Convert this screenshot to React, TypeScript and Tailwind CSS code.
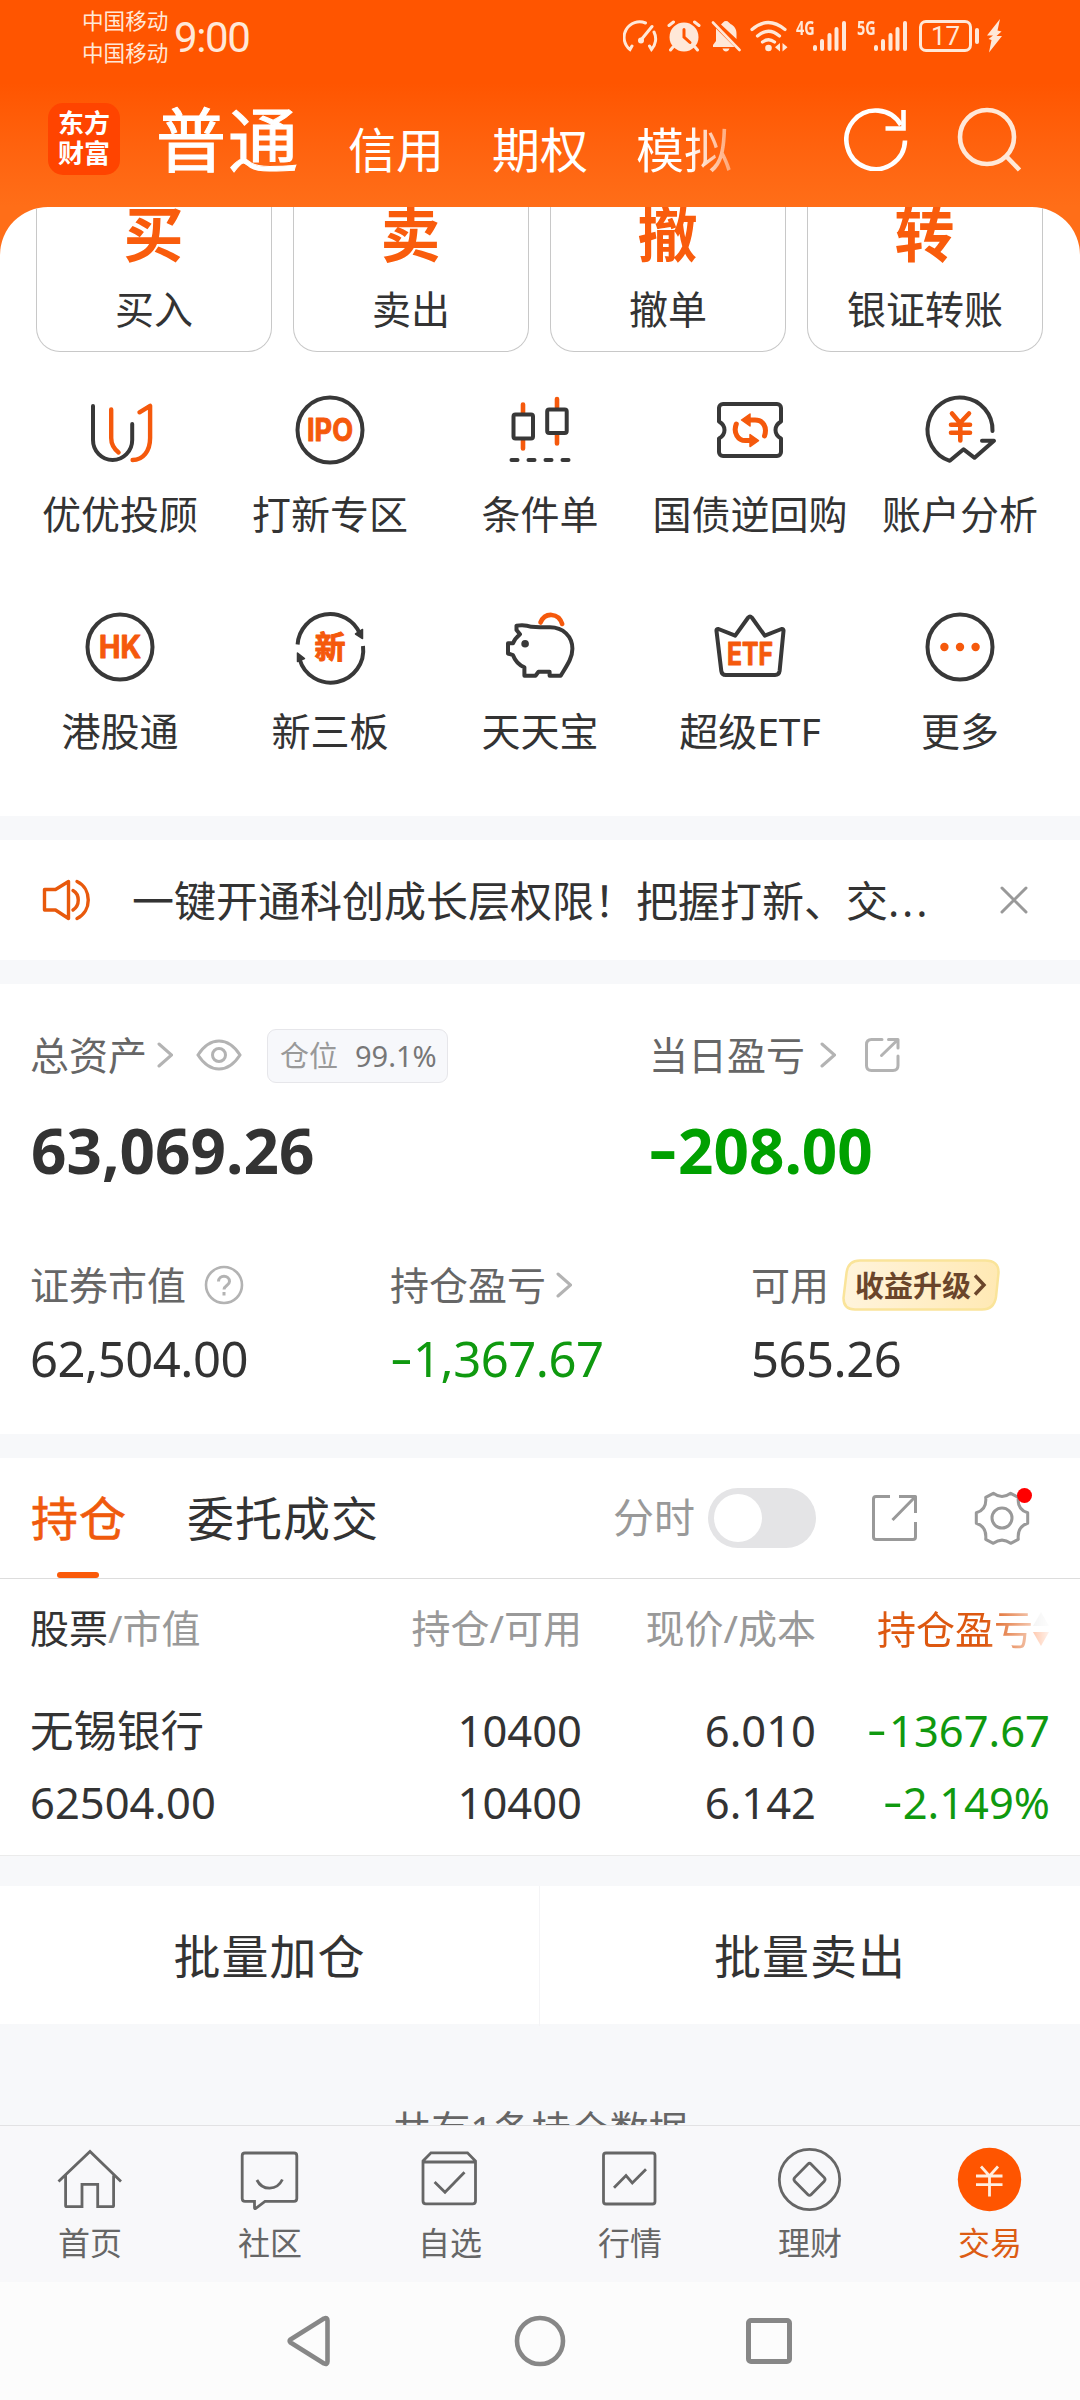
import type { ReactNode } from 'react';
import clsx from 'clsx';

const quickActions = [
  { mark: '买', label: '买入' },
  { mark: '卖', label: '卖出' },
  { mark: '撤', label: '撤单' },
  { mark: '转', label: '银证转账' },
];

const DARK = '#383838';
const ORANGE = '#f5590c';

function FeatureSvg({ children }: { children: ReactNode }) {
  return (
    <svg
      width="72"
      height="72"
      viewBox="0 0 72 72"
      fill="none"
      stroke={DARK}
      strokeWidth="4"
      strokeLinecap="round"
      strokeLinejoin="round"
      className="overflow-visible"
    >
      {children}
    </svg>
  );
}

function IconText({ y, size, width, children }: { y: number; size: number; width: number; children: string }) {
  return (
    <text
      x={36 - width / 2}
      y={y}
      fontSize={size}
      fontWeight="700"
      fill={ORANGE}
      stroke={ORANGE}
      strokeWidth="1"
      textLength={width}
      lengthAdjust="spacingAndGlyphs"
      className="font-[Inter,'Noto_Sans_CJK_SC',sans-serif]"
    >
      {children}
    </text>
  );
}

const features = [
  {
    label: '优优投顾',
    icon: (
      <FeatureSvg>
        <path d="M9 12V46a19.6 20 0 0 0 39.2 0V30" />
        <path stroke={ORANGE} strokeWidth="4.4" d="M27.2 15.5V44c0 6 3 11 7.4 14.5M55.5 18.3l10.6-6.5V44c0 13-7 22-17.5 22" />
      </FeatureSvg>
    ),
  },
  {
    label: '打新专区',
    icon: (
      <FeatureSvg>
        <circle cx="36" cy="36" r="32.5" />
        <IconText y={47.2} size={31} width={46}>IPO</IconText>
      </FeatureSvg>
    ),
  },
  {
    label: '条件单',
    icon: (
      <FeatureSvg>
        <path stroke={ORANGE} strokeWidth="4.6" d="M19 10.5V19M19 46v8.5M53 5v8.5M53 41v8.5" />
        <rect x="9.5" y="20.5" width="19.5" height="24" rx="2" />
        <rect x="43.2" y="15.5" width="19.5" height="23.5" rx="2" />
        <path d="M7.5 66h6M24.5 66h6M41.5 66h6M58.5 66h6" />
      </FeatureSvg>
    ),
  },
  {
    label: '国债逆回购',
    icon: (
      <FeatureSvg>
        <path d="M9 10H63a4 4 0 0 1 4 4V27.5c-3.500 2-5.500 5-5.500 8.500s2 6.500 5.500 8.500V58a4 4 0 0 1-4 4H9a4 4 0 0 1-4-4V44.500c3.500-2 5.500-5 5.500-8.500s-2-6.500-5.500-8.500V14a4 4 0 0 1 4-4Z" />
        <path stroke={ORANGE} strokeWidth="5" d="M36 26h5c8 0 12.500 7 9.500 16M22.300 30c-3.500 9 2 16.600 9 16.600h6" />
        <path fill={ORANGE} stroke={ORANGE} strokeWidth="1.5" d="M27.500 26l8.500-6v12ZM44.500 46.600l-8.500-6v12Z" />
      </FeatureSvg>
    ),
  },
  {
    label: '账户分析',
    icon: (
      <FeatureSvg>
        <path d="M68.500 37A32.500 32.500 0 1 0 25.800 66.800L39.600 55.300l11 8.500L70 46.700H58" />
        <path stroke={ORANGE} strokeWidth="4.6" d="M28 19.500l8 9.500 9-9.500M36.300 29V46.500M27 30.800h19M27 38.700h19" />
      </FeatureSvg>
    ),
  },
  {
    label: '港股通',
    icon: (
      <FeatureSvg>
        <circle cx="36" cy="36" r="32.5" />
        <IconText y={47.2} size={31} width={42}>HK</IconText>
      </FeatureSvg>
    ),
  },
  {
    label: '新三板',
    icon: (
      <FeatureSvg>
        <path strokeLinecap="butt" d="M3.600 33.500A32.500 32.500 0 0 1 66 23M69 35A32.500 32.500 0 0 1 5.500 48" />
        <path fill={DARK} strokeWidth="1.5" d="M68.500 18.500v9l-7-4.500ZM3.500 42v8.500l7-3Z" />
        <IconText y={47} size={31} width={31}>新</IconText>
      </FeatureSvg>
    ),
  },
  {
    label: '天天宝',
    icon: (
      <FeatureSvg>
        <path d="M36 16.300H46c13 0 22.400 9 22.400 21.500 0 9-5 16-11.700 27H45.600v-4H34.500l-3 4H20.400V56.300C15 54 11 49.500 9 44.200L4 42.500V32.300h5c1.500-4 4-6.500 7-9L12.500 19V14.600c6-1 11-.3 15 1.200Z" />
        <circle cx="21.100" cy="32.700" r="3.8" fill={DARK} stroke="none" />
        <path stroke={ORANGE} strokeWidth="4.6" d="M36.500 11.500C41 .8 54.500 1.500 58.200 13" />
      </FeatureSvg>
    ),
  },
  {
    label: '超级ETF',
    icon: (
      <FeatureSvg>
        <path d="M4.500 18l16.700 6.700L34.200 6.500q1.800-2 3.600 0L50.800 24.700 67.500 18q2.300-.3 2 2L65.600 60q-.6 4-4.500 4H11.800q-4 0-4.500-4L2.500 20q-.3-2.300 2-2Z" />
        <IconText y={54} size={31} width={46}>ETF</IconText>
      </FeatureSvg>
    ),
  },
  {
    label: '更多',
    icon: (
      <FeatureSvg>
        <circle cx="36" cy="36" r="32.5" />
        <g fill={ORANGE} stroke="none">
          <circle cx="20.4" cy="36" r="4.2" />
          <circle cx="36" cy="36" r="4.2" />
          <circle cx="51.6" cy="36" r="4.2" />
        </g>
      </FeatureSvg>
    ),
  },
];

const navItems = [
  {
    label: '首页',
    icon: <path d="M.5 33.500L32 3.500l31 30M7.600 27.500V57.500q0 1.200 1.200 1.200H24V36.400H39.700V58.700H54.400q1.200 0 1.200-1.200V27.500" />,
  },
  {
    label: '社区',
    icon: (
      <path d="M7 5H56q2.800 0 2.800 2.800V50.500q0 2.800-2.800 2.800H27L17.500 60.500q-1 .5-1-1V53.300H7q-2.800 0-2.800-2.800V7.800Q4.200 5 7 5ZM18.900 32c5.500 11 20 11 25.500-.5" />
    ),
  },
  {
    label: '自选',
    icon: (
      <path d="M5 14H57.500M5 13L13 4.800H49.500L57.500 13V53q0 2.800-2.800 2.800H7.800Q5 55.800 5 53ZM16.600 34L27 44.300 46.500 24.300" />
    ),
  },
  {
    label: '行情',
    icon: (
      <>
        <rect x="5.5" y="5" width="51.5" height="51" rx="2.5" />
        <path d="M16 39.700L28 27.500l6.300 7.500L48 21.300" />
      </>
    ),
  },
  {
    label: '理财',
    icon: (
      <>
        <circle cx="31.5" cy="31.5" r="30.2" />
        <path d="M29.800 16.200q1.700-1.700 3.400 0L46.300 29.600q1.500 1.800 0 3.600L33.200 46.600q-1.700 1.700-3.400 0L16.700 33.200q-1.500-1.800 0-3.600Z" />
      </>
    ),
  },
  {
    label: '交易',
    active: true,
    icon: (
      <>
        <circle cx="31.5" cy="31.5" r="31.7" fill="#ff5500" stroke="none" />
        <path stroke="#ffeee0" d="M23 18.500l8.500 9.500L40 18.500M31.500 28V48.500M18 28h26.500M18 36.700h26.500" />
      </>
    ),
  },
];

function Chevron({ className }: { className?: string }) {
  return (
    <svg width="16" height="26" viewBox="0 0 16 26" fill="none" stroke="#b3b3b3" strokeWidth="3" strokeLinecap="round" className={className}>
      <path d="M2 2l12.500 11L2 24" />
    </svg>
  );
}

// Negative amounts use a wider, slightly raised minus
function Minus({ className }: { className: string }) {
  return <span className={clsx('inline-block origin-left text-left', className)}>-</span>;
}

function Signal({ label, className }: { label: string; className?: string }) {
  return (
    <div className={clsx('relative h-8', className)}>
      <span className="absolute left-0 top-0 origin-left scale-x-[0.72] text-[20px] font-bold leading-[15px]">{label}</span>
      <svg width="34" height="32" viewBox="0 0 34 32" className="ml-[17px]">
        <g fill="currentColor">
          <rect x="0" y="25" width="4" height="6" rx="2" />
          <rect x="7" y="19" width="4" height="12" rx="2" />
          <rect x="14.5" y="13" width="4" height="18" rx="2" />
          <rect x="21.5" y="7" width="4" height="24" rx="2" />
          <rect x="29" y="1" width="4" height="30" rx="2" />
        </g>
      </svg>
    </div>
  );
}

function StatusBar() {
  return (
    <div className="flex h-[76px] pl-[82px] text-[#ffe8d8]">
      <div className="w-[92px] pt-[5px] text-[21.6px] leading-8">
        <div>中国移动</div>
        <div>中国移动</div>
      </div>
      <div className="w-[449px] pt-[14px] font-[Roboto,sans-serif] text-[42px] leading-[48px] -tracking-[1.4px]">9:00</div>
      <div className="flex h-[72px] items-center">
        <svg width="36" height="32" viewBox="0 0 36 32" fill="none" stroke="currentColor" strokeWidth="3" strokeLinecap="round">
          <path d="M22.500 3A15.500 15.500 0 0 0 7 29.500l2-3.500M31 12a15.500 15.500 0 0 1-2.500 17.500L26.500 26M18 20L29 6.500" />
          <circle cx="18" cy="20.5" r="3" fill="currentColor" stroke="none" />
        </svg>
        <svg width="34" height="32" viewBox="0 0 34 32" className="ml-2" stroke="currentColor" strokeWidth="3" strokeLinecap="round" fill="none">
          <circle cx="17" cy="17" r="14.5" fill="currentColor" stroke="none" />
          <path d="M2 5.500L6.500 2M32 5.500L27.500 2M6 27l-2.500 3M28 27l2.500 3" />
          <path stroke="#ff5500" d="M17 9.500V17l6 5.500" />
        </svg>
        <svg width="30" height="32" viewBox="0 0 30 32" className="ml-[10px]">
          <path fill="currentColor" d="M10 4.500C12 3 12.500 1 15 1s3 2 4.500 3c4 2 6 5 6 10v5ZM5 8.500L23.500 27H2v-2l3-4ZM11.500 28.500h7q-1 3-3.500 3t-3.500-3Z" />
          <path stroke="currentColor" strokeWidth="2.6" strokeLinecap="round" d="M2 2.500L28.500 30" />
        </svg>
        <svg width="38" height="32" viewBox="0 0 38 32" className="ml-[9px]" fill="none" stroke="currentColor" strokeWidth="3.2" strokeLinecap="round">
          <path d="M2 9.500q16-14 33 0M7.500 16q11-9.500 22 0M12.500 22q6-4.500 12 0" />
          <circle cx="18.5" cy="28" r="3.3" fill="currentColor" stroke="none" />
          <path fill="currentColor" stroke="none" d="M30 23v8.500l-5-4.200ZM32.500 23v8.500l5-4.200Z" />
        </svg>
        <Signal label="4G" className="ml-2" />
        <Signal label="5G" className="ml-[10px]" />
        <div className="ml-[11px] flex h-8 w-[53px] items-center justify-center rounded-[7px] border-[3px] border-current font-[Roboto,sans-serif] text-[26px] leading-none">17</div>
        <div className="ml-[3px] h-4 w-1 rounded-full bg-current" />
        <svg width="16" height="34" viewBox="0 0 16 34" className="ml-2">
          <path fill="currentColor" d="M13 0L0 16.500h6L1.500 20l3 1L2 33.500 15 17H9.500l5-4.500-4-1Z" />
        </svg>
      </div>
    </div>
  );
}

function Header() {
  return (
    <header className="h-[207px] shrink-0 bg-linear-to-b from-[#ff5500] from-40% to-[#ff6e18]">
      <StatusBar />
      <div className="flex h-[126px] items-center pl-12 text-white">
        <div className="flex size-[72px] flex-col items-center justify-center rounded-[15px] bg-[#ff4400] pb-[2px] text-[26px] font-bold leading-[30px]">
          <div>东方</div>
          <div>财富</div>
        </div>
        <div className="ml-[36px] mt-[2px] text-[70px] leading-none tracking-[2px] [-webkit-text-stroke:1px_white]">普通</div>
        <div className="ml-12 mt-[22px] flex gap-12 text-[48px] leading-none">
          <span>信用</span>
          <span>期权</span>
          <span className="bg-linear-to-r from-white from-55% to-white/40 bg-clip-text text-transparent">模拟</span>
        </div>
        <svg width="64" height="64" viewBox="0 0 64 64" className="ml-[112px]" fill="none" stroke="currentColor" strokeWidth="4.6">
          <path d="M61 33.500A29.300 29.300 0 1 1 57 18" />
          <path d="M59.500 3V21.500H41.500" />
        </svg>
        <svg width="66" height="66" viewBox="0 0 66 66" className="ml-12 text-[#ffe8d8]" fill="none" stroke="currentColor" strokeWidth="4.6">
          <circle cx="31" cy="31" r="27" />
          <path d="M50 50L63.500 64" />
        </svg>
      </div>
    </header>
  );
}

function Shortcuts() {
  return (
    <div className="shrink-0 bg-[#ff6e18]">
      <section className="h-[609px] overflow-hidden rounded-t-[48px] bg-white">
        <div className="grid grid-cols-4 gap-[21px] pl-9 pr-[37px]">
          {quickActions.map((a) => (
            <div key={a.label} className="flex h-[145px] flex-col items-center rounded-b-[24px] border border-t-0 border-[#c8c8c8]">
              <div className="-mt-[4px] mr-[1px] text-[60px] font-bold leading-[62px] text-[#f95c0c]">{a.mark}</div>
              <div className="mt-[20px] text-[39px] leading-[48px]">{a.label}</div>
            </div>
          ))}
        </div>
        <div className="mt-[42px] grid grid-cols-5 gap-y-[73px] px-[15px]">
          {features.map((f) => (
            <div key={f.label} className="flex flex-col items-center">
              {f.icon}
              <div className="mt-[24px] whitespace-nowrap text-[39px] leading-[48px]">{f.label}</div>
            </div>
          ))}
        </div>
      </section>
    </div>
  );
}

function Notice() {
  return (
    <section className="mt-6 flex h-[120px] shrink-0 items-center bg-white pl-[42px]">
      <svg width="48" height="42" viewBox="0 0 48 42" fill="none" stroke="#e8590c" strokeWidth="3.4" strokeLinejoin="round" strokeLinecap="round">
        <path d="M2.500 10.500H13.500L26.500 2.500V39.500L13.500 31H2.500ZM31 11.500c7 4 7 15 0 19.500M35 2.500c15 7 15 30 0 37" />
      </svg>
      <div className="ml-[42px] w-[801px] whitespace-nowrap pt-[2px] text-[42px] leading-[48px]">
        一键开通科创成长层权限！把握打新、交<span className="tracking-[2.8px]">...</span>
      </div>
      <svg width="28" height="28" viewBox="0 0 28 28" className="ml-[67px]" fill="none" stroke="#999999" strokeWidth="3" strokeLinecap="round">
        <path d="M2 2l24 24M26 2L2 26" />
      </svg>
    </section>
  );
}

function Assets() {
  return (
    <section className="mt-6 h-[450px] shrink-0 bg-white pl-[30px] pt-[44px] text-[39px] text-[#666666]">
      <div className="flex h-[54px] items-center">
        <div className="flex w-[619px] items-center">
          总资产
          <Chevron className="ml-[10px]" />
          <svg width="46" height="32" viewBox="0 0 46 32" className="ml-[23px]" fill="none" stroke="#b3b3b3" strokeWidth="3">
            <path d="M2 16Q11 2 23 2t21 14Q35 30 23 30T2 16Z" />
            <circle cx="23" cy="16" r="6.5" />
          </svg>
          <div className="ml-[25px] mt-[2px] flex h-[54px] w-[181px] items-center rounded-[9px] border border-[#e6e6ea] bg-[#f7f8fb] pb-[2px] pl-3 text-[29px] leading-none text-[#999999]">
            仓位<span className="ml-[17px] text-[#777777]">99.1%</span>
          </div>
        </div>
        当日盈亏
        <Chevron className="ml-[15px]" />
        <svg width="36" height="36" viewBox="0 0 36 36" className="ml-[28px]" fill="none" stroke="#b3b3b3" strokeWidth="3" strokeLinecap="round" strokeLinejoin="round">
          <path d="M18 2.500H7.500q-5 0-5 5v21q0 5 5 5H29q5 0 5-5V19M24.500 2.500H34V11M33.500 3L17.500 18.500" />
        </svg>
      </div>
      <div className="mt-[32px] flex h-[72px] items-center text-[62px] font-bold leading-none">
        <div className="w-[619px] pl-px text-[#333333]">63,069.26</div>
        <div className="text-[#00a000]"><Minus className="w-[29px] -translate-y-[2px] scale-x-[1.4]" />208.00</div>
      </div>
      <div className="mt-[72px] flex h-[54px] items-center">
        <div className="flex w-[360px] items-center">
          证券市值
          <svg width="40" height="40" viewBox="0 0 40 40" className="ml-[18px]" fill="none" stroke="#b3b3b3" strokeWidth="2.6">
            <circle cx="20" cy="20" r="18" />
            <path strokeWidth="3" d="M14.500 16.500c0-7 11-7 11 0 0 4-5.500 4-5.500 8M20 27v3.500" />
          </svg>
        </div>
        <div className="flex w-[361px] items-center">
          持仓盈亏
          <Chevron className="ml-[10px]" />
        </div>
        可用
        <div className="relative ml-[13px] flex h-[52px] w-[158px] items-center pl-[13px] text-[29px] font-bold leading-none text-[#6a452b]">
          <svg width="158" height="52" viewBox="0 0 158 52" className="absolute inset-0">
            <defs>
              <linearGradient id="badge" x1="0" x2="1">
                <stop offset="0" stopColor="#fff4dc" />
                <stop offset="1" stopColor="#ffe9b4" />
              </linearGradient>
            </defs>
            <path fill="url(#badge)" stroke="#fae49a" strokeWidth="2.5" d="M18 1.500H143Q157 1.500 156.500 14L154 38Q152 50.500 140 50.500H13Q1.500 50.500 1.500 39L4.500 14Q6 1.500 18 1.500Z" />
          </svg>
          <span className="relative">收益升级</span>
          <svg width="14" height="22" viewBox="0 0 14 22" className="relative ml-[2px]" fill="none" stroke="currentColor" strokeWidth="3.4">
            <path d="M2 1.500l9 9.500-9 9.500" />
          </svg>
        </div>
      </div>
      <div className="mt-[16px] flex h-[60px] items-center text-[49px] leading-none -tracking-[0.5px] text-[#333333]">
        <div className="w-[360px]">62,504.00</div>
        <div className="w-[361px] text-[#0f990f]"><Minus className="w-[23px] -translate-y-[2px] scale-x-[1.45]" />1,367.67</div>
        <div>565.26</div>
      </div>
    </section>
  );
}

function Holdings() {
  return (
    <section className="mt-6 h-[398px] shrink-0 border-b border-[#ebebeb] bg-white">
      <div className="relative flex h-[121px] items-center border-b border-[#dddddd] pl-[30px] text-[47px]">
        <span className="pl-px text-[#f05a0c] tracking-[1px] [-webkit-text-stroke:0.6px_#f05a0c]">持仓</span>
        <div className="absolute bottom-0 left-[57px] h-[6px] w-[42px] rounded-full bg-[#fa5a0a]" />
        <span className="ml-[60px] w-[426px] tracking-[1px]">委托成交</span>
        <span className="text-[41px] text-[#999999]">分时</span>
        <div className="ml-[13px] flex h-[60px] w-[108px] items-center rounded-full bg-[#e4e4e6] pl-[6px]">
          <div className="size-12 rounded-full bg-white" />
        </div>
        <svg width="48" height="48" viewBox="0 0 48 48" className="ml-[55px]" fill="none" stroke="#999999" strokeWidth="3" strokeLinejoin="round">
          <path d="M19 2.500H5q-2.500 0-2.500 2.500V43q0 2.500 2.500 2.500H42q2.500 0 2.500-2.500V28M28 2.500H44.500V19M44 3L21.500 26" />
        </svg>
        <div className="relative ml-[55px]">
          <svg width="56" height="56" viewBox="0 0 56 56" fill="none" stroke="#999999" strokeWidth="3" strokeLinejoin="round">
            <path d="M19.300 3.300q8.700 6.400 17.400 0L44.300 7.300Q43 20 53.700 22.700V33.300Q43 36.500 44.300 49.300L36.700 53.300q-8.700-6.400-17.400 0L11.700 49.300Q13 36.500 2.300 33.300V22.700Q13 20 11.700 7.300Z" />
            <circle cx="28" cy="28" r="10" />
          </svg>
          <div className="absolute -right-[2px] -top-[2px] size-[15px] rounded-full bg-[#ff0000]" />
        </div>
      </div>
      <div className="grid grid-cols-[352px_200px_234px_234px] pl-[30px] text-right text-[43.5px] leading-[72px]">
        <div className="h-[115px] pt-[13px] text-left text-[39px] text-[#999999]"><span className="text-[#333333]">股票</span>/市值</div>
        <div className="pt-[13px] text-[39px] text-[#999999]">持仓/可用</div>
        <div className="pt-[13px] text-[39px] text-[#999999]">现价/成本</div>
        <div className="flex h-[98px] items-center justify-end pr-px pt-[1px] text-[39px] text-[#dd5810] [mask-image:linear-gradient(to_right,#000_72%,transparent_102%)]">
          持仓盈亏
          <svg width="16" height="34" viewBox="0 0 16 34">
            <path fill="#dddddd" d="M8 0l8 14H0Z" />
            <path fill="#ff5500" d="M8 34l8-14H0Z" />
          </svg>
        </div>
        <div className="text-left">无锡银行</div>
        <div>10400</div>
        <div>6.010</div>
        <div className="text-[#0f990f]"><Minus className="w-[22px] -translate-y-[2px] scale-x-[1.4]" />1367.67</div>
        <div className="text-left">62504.00</div>
        <div>10400</div>
        <div>6.142</div>
        <div className="text-[#0f990f]"><Minus className="w-[20px] -translate-y-[2px] scale-x-[1.4]" />2.149%</div>
      </div>
    </section>
  );
}

export default function App() {
  return (
    <div className="flex h-[2400px] w-[1080px] flex-col overflow-hidden bg-[#f7f8fa] font-['Noto_Sans','Noto_Sans_CJK_SC',sans-serif] text-[#333333]">
      <Header />
      <Shortcuts />
      <Notice />
      <Assets />
      <Holdings />
      <div className="mt-[30px] grid h-[138px] shrink-0 grid-cols-2 bg-white text-center text-[47px] leading-[140px] tracking-[1px]">
        <div className="border-r border-[#f4f4f6]">批量加仓</div>
        <div>批量卖出</div>
      </div>
      <div className="h-[101px] shrink-0 overflow-hidden pt-[81px] text-center text-[39px] leading-[48px] text-[#666666]">共有1条持仓数据</div>

      {/* Bottom tabs */}
      <nav className="grid h-[157px] shrink-0 grid-cols-6 border-t border-[#e2e2e4] bg-[#f8f8fa] pt-[22px]">
        {navItems.map((n) => (
          <div key={n.label} className={clsx('flex flex-col items-center text-[32px] leading-10', n.active ? 'text-[#dc5c14]' : 'text-[#666666]')}>
            <svg width="64" height="64" viewBox="0 0 64 64" fill="none" stroke="#666666" strokeWidth="2.8" className="overflow-visible">
              {n.icon}
            </svg>
            <div className="mt-[11px]">{n.label}</div>
          </div>
        ))}
      </nav>

      {/* System navigation */}
      <div className="flex h-[118px] shrink-0 items-center bg-[#fcfcfc] pl-[286px]">
        <svg width="46" height="54" viewBox="0 0 46 54" fill="none" stroke="#878787" strokeWidth="4.6" strokeLinejoin="round">
          <path d="M4.500 25.500Q3 27 4.500 28.500L38 49.500q3.500 1.500 3.500-2V6.500q0-3.500-3.500-2Z" />
        </svg>
        <svg width="54" height="54" viewBox="0 0 54 54" className="ml-[181px]" fill="none" stroke="#878787" strokeWidth="4.6">
          <circle cx="27" cy="27" r="23" />
        </svg>
        <div className="ml-[179px] size-[46px] rounded-[5px] border-[5px] border-[#878787]" />
      </div>
    </div>
  );
}
